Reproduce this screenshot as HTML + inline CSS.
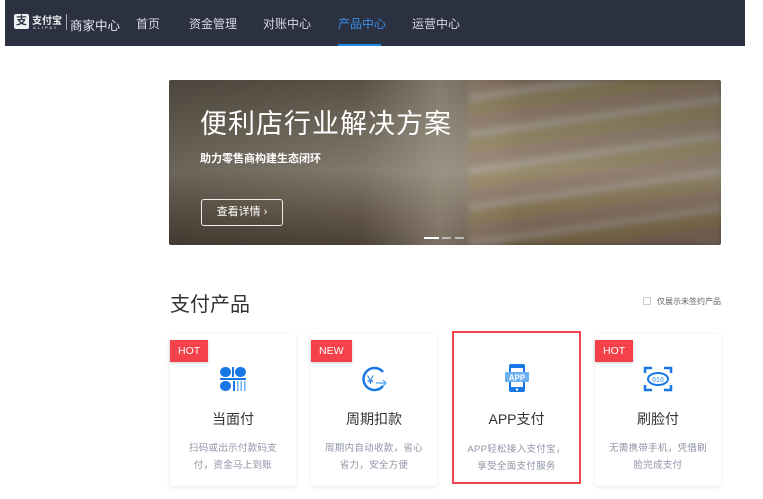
<!DOCTYPE html>
<html><head><meta charset="utf-8"><style>
*{margin:0;padding:0;box-sizing:border-box}
body{width:763px;height:499px;background:#fff;position:relative;overflow:hidden;font-family:"Liberation Sans","Noto Sans CJK SC",sans-serif}
.hdr{position:absolute;left:5px;top:0;width:740px;height:46px;background:#2b3141}
.nav{position:absolute;top:15px;font-size:12px;color:#d6d9e0}
.banner{position:absolute;left:169px;top:80px;width:552px;height:165px;overflow:hidden;border-radius:2px;
background:linear-gradient(180deg,#6b6254 0%,#8a8272 30%,#a39a8a 55%,#7a6c5c 80%,#5a4c40 100%)}
.card{position:absolute;top:334px;width:126px;height:152px;background:#fff;border-radius:3px;box-shadow:0 1px 5px rgba(0,0,0,.1);text-align:center}
.tag{position:absolute;left:0;top:6px;height:22px;line-height:22px;padding:0 8px;background:#f5424a;color:#fff;font-size:10.5px;box-shadow:0 1px 3px rgba(0,0,0,.2)}
.ct{position:absolute;left:0;right:0;top:75px;font-size:14px;color:#333}
.cd{position:absolute;left:0;right:0;top:106px;font-size:9.5px;color:#8d94a5;line-height:17px;white-space:nowrap;letter-spacing:.3px}
.ic{position:absolute;left:48px;top:30px;width:30px;height:30px}
</style></head><body>
<div class="hdr">
 <div style="position:absolute;left:9px;top:14px;width:15px;height:15px;background:#eef0f3;border-radius:2px;color:#2b3141;font-size:11px;line-height:15px;text-align:center;font-weight:bold">支</div>
 <div style="position:absolute;left:27px;top:12px;color:#eef0f3;font-size:10px;font-weight:bold">支付宝</div>
 <div style="position:absolute;left:28px;top:25px;color:#eef0f3;font-size:4px;letter-spacing:2px">ALIPAY</div>
 <div style="position:absolute;left:61px;top:14px;width:1px;height:16px;background:#aab"></div>
 <div class="nav" style="left:65px;font-size:12.5px;color:#e6e8ec">商家中心</div>
 <div class="nav" style="left:131px">首页</div>
 <div class="nav" style="left:184px">资金管理</div>
 <div class="nav" style="left:258px">对账中心</div>
 <div class="nav" style="left:333px;color:#3a8ee6">产品中心</div>
 <div style="position:absolute;left:333px;top:44px;width:43px;height:2px;background:#1e88e5"></div>
 <div class="nav" style="left:407px">运营中心</div>
</div>
<div class="banner">
 <div style="position:absolute;left:190px;top:0;width:160px;height:165px;background:linear-gradient(90deg,rgba(200,190,170,0),rgba(210,200,180,.45),rgba(200,190,170,0))"></div>
 <div style="position:absolute;left:300px;top:0;width:252px;height:165px;filter:blur(3px);background:repeating-linear-gradient(172deg,rgba(190,150,130,.35) 0 14px,rgba(230,220,205,.35) 14px 22px,rgba(200,170,90,.3) 22px 36px)"></div>
 <div style="position:absolute;left:0;top:0;width:552px;height:165px;background:linear-gradient(90deg,rgba(40,35,30,.45),rgba(40,35,30,.15) 60%,rgba(40,35,30,.25))"></div>
 <div style="position:absolute;left:31px;top:22px;color:#fff;font-size:27px;letter-spacing:1px">便利店行业解决方案</div>
 <div style="position:absolute;left:31px;top:70px;color:#fff;font-size:11px;font-weight:bold">助力零售商构建生态闭环</div>
 <div style="position:absolute;left:32px;top:119px;width:82px;height:27px;border:1px solid #eee;border-radius:3px;color:#fff;font-size:11px;line-height:25px;text-align:center">查看详情 ›</div>
 <div style="position:absolute;left:255px;top:157px;width:15px;height:2px;background:#fff"></div>
 <div style="position:absolute;left:273px;top:157px;width:9px;height:2px;background:#bbb"></div>
 <div style="position:absolute;left:286px;top:157px;width:9px;height:2px;background:#bbb"></div>
</div>
<div style="position:absolute;left:170px;top:288px;font-size:20px;color:#333">支付产品</div>
<div style="position:absolute;left:643px;top:297px;width:8px;height:8px;border:1px solid #ccc"></div>
<div style="position:absolute;left:657px;top:296px;font-size:8px;color:#666">仅展示未签约产品</div>

<div class="card" style="left:170px"><div class="tag">HOT</div>
 <svg class="ic" viewBox="0 0 30 30"><rect x="2" y="3" width="11" height="10" rx="5" fill="#1677e5"/><rect x="17" y="3" width="11" height="10" rx="5" fill="#1677e5"/><rect x="14" y="3" width="2" height="10" fill="#1677e5"/><rect x="2" y="14" width="26" height="2" fill="#1677e5"/><rect x="2" y="17" width="11" height="10" rx="5" fill="#1677e5"/><rect x="15" y="17" width="2" height="10" fill="#1677e5"/><rect x="19" y="17" width="1.5" height="10" fill="#6ab0f3"/><rect x="22.5" y="17" width="1.5" height="10" fill="#6ab0f3"/><rect x="26" y="17" width="1.5" height="10" fill="#6ab0f3"/></svg>
 <div class="ct">当面付</div><div class="cd">扫码或出示付款码支<br>付，资金马上到账</div></div>
<div class="card" style="left:311px"><div class="tag">NEW</div>
 <svg class="ic" viewBox="0 0 30 30"><path d="M24 8A11 11 0 1 0 24 22" fill="none" stroke="#1677e5" stroke-width="2.5"/><text x="8" y="20" font-size="12" fill="#1677e5" font-family="Liberation Sans">¥</text><path d="M17 19h10M24 16l3 3-3 3" stroke="#6ab0f3" stroke-width="1.5" fill="none"/></svg>
 <div class="ct">周期扣款</div><div class="cd">周期内自动收款，省心<br>省力，安全方便</div></div>
<div class="card" style="left:452px;top:331px;width:129px;height:153px;border:2px solid #f0454b;border-radius:0;box-shadow:none">
 <svg class="ic" viewBox="0 0 30 30" style="top:30px"><rect x="7" y="1" width="16" height="28" rx="2" fill="#1677e5"/><rect x="9" y="5" width="12" height="19" fill="#fff"/><circle cx="15" cy="26.5" r="1.2" fill="#fff"/><rect x="3" y="9" width="24" height="10" rx="1" fill="#6ab0f3"/><text x="15" y="17.5" font-size="8" fill="#fff" text-anchor="middle" font-family="Liberation Sans" font-weight="bold">APP</text></svg>
 <div class="ct" style="top:76px">APP支付</div><div class="cd" style="top:108px">APP轻松接入支付宝，<br>享受全面支付服务</div></div>
<div class="card" style="left:595px"><div class="tag">HOT</div>
 <svg class="ic" viewBox="0 0 30 30"><path d="M2 9V4h7M21 4h7v5M28 21v5h-7M9 26H2v-5" fill="none" stroke="#1677e5" stroke-width="2.5"/><ellipse cx="15" cy="15" rx="10" ry="6" fill="none" stroke="#1677e5" stroke-width="2"/><text x="15" y="18" font-size="7" fill="#6ab0f3" text-anchor="middle" font-family="Liberation Sans" font-weight="bold">010</text></svg>
 <div class="ct">刷脸付</div><div class="cd">无需携带手机，凭借刷<br>脸完成支付</div></div>
</body></html>
